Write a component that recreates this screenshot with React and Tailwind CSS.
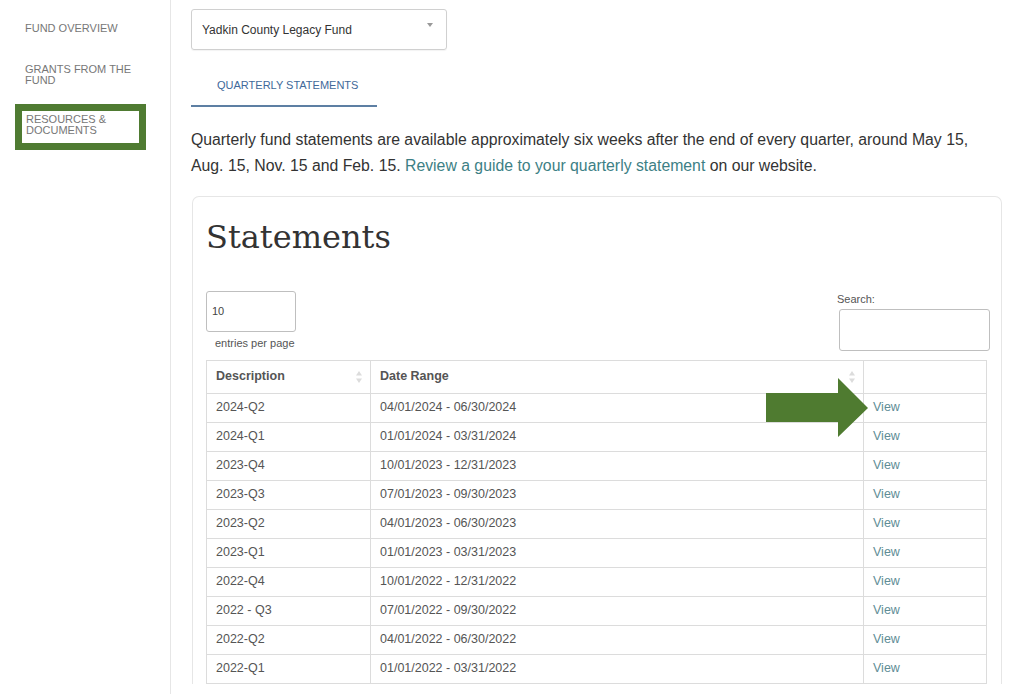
import React from "react";

const statements = [
  { description: "2024-Q2", range: "04/01/2024 - 06/30/2024" },
  { description: "2024-Q1", range: "01/01/2024 - 03/31/2024" },
  { description: "2023-Q4", range: "10/01/2023 - 12/31/2023" },
  { description: "2023-Q3", range: "07/01/2023 - 09/30/2023" },
  { description: "2023-Q2", range: "04/01/2023 - 06/30/2023" },
  { description: "2023-Q1", range: "01/01/2023 - 03/31/2023" },
  { description: "2022-Q4", range: "10/01/2022 - 12/31/2022" },
  { description: "2022 - Q3", range: "07/01/2022 - 09/30/2022" },
  { description: "2022-Q2", range: "04/01/2022 - 06/30/2022" },
  { description: "2022-Q1", range: "01/01/2022 - 03/31/2022" },
];

const SortIcon = () => (
  <svg className="mr-[-2px] h-[14px] w-[8px]" viewBox="0 0 8 14">
    <path d="M4 1 L7 5.5 H1 Z" fill="#dcdcdc" />
    <path d="M4 13 L7 8.5 H1 Z" fill="#dcdcdc" />
  </svg>
);

const Sidebar = () => (
  <aside className="w-[171px] shrink-0 border-r border-[#e6e6e6] pt-[23px]">
    <div className="pl-[25px] text-[11px] leading-[11px] text-[#777]">FUND OVERVIEW</div>
    <div className="mt-[30px] pl-[25px] text-[11px] leading-[11px] text-[#777]">
      GRANTS FROM THE
      <br />
      FUND
    </div>
    <div className="ml-[15px] mt-[18px] h-[46px] w-[131px] border-[7px] border-[#4f7b32] bg-white pl-[4px] pt-[3px] text-[11px] leading-[11px] text-[#777]">
      RESOURCES &amp;
      <br />
      DOCUMENTS
    </div>
  </aside>
);

const Arrow = () => (
  <svg
    className="pointer-events-none absolute left-[594px] top-[378px] h-[60px] w-[104px]"
    viewBox="0 0 104 60"
  >
    <path d="M1 15 H73 V0 L103 30 L73 59 V44 H1 Z" fill="#4f7b30" />
  </svg>
);

const App = () => {
  return (
    <div className="flex h-[694px] w-[1024px] overflow-hidden bg-white font-['Liberation_Sans',Arial,sans-serif]">
      <Sidebar />
      <main className="relative flex-1 pl-[20px] pt-[9px]">
        <div className="flex h-[41px] w-[256px] items-center justify-between rounded-[3px] border border-[#d0d0d0] pl-[10px] pr-[13px] shadow-[0_1px_1px_rgba(0,0,0,0.05)]">
          <span className="text-[12px] text-[#333]">Yadkin County Legacy Fund</span>
          <span className="mb-[10px] h-0 w-0 border-x-[3px] border-t-[4px] border-x-transparent border-t-[#999]" />
        </div>
        <div className="mt-[29px] w-[186px] border-b-2 border-[#5d7fa3] pb-[14px] pl-[26px] text-[11px] leading-[12px] text-[#41699a]">
          QUARTERLY STATEMENTS
        </div>
        <p className="mt-[20px] w-[790px] text-[15.8px] leading-[26px] text-[#333]">
          Quarterly fund statements are available approximately six weeks after the end of every
          quarter, around May 15, Aug. 15, Nov. 15 and Feb. 15.{" "}
          <span className="text-[#3d7f85]">Review a guide to your quarterly statement</span> on our
          website.
        </p>
        <section className="ml-[1px] mt-[17px] w-[810px] rounded-t-[7px] border border-b-0 border-[#e6e6e6] px-[13px] pt-[20px]">
          <h1 className="font-['DejaVu_Serif',serif] text-[32px] leading-[40px] text-[#333]">
            Statements
          </h1>
          <div className="mt-[34px] flex items-start justify-between">
            <div>
              <div className="flex h-[41px] w-[90px] items-center rounded-[3px] border border-[#bfbfbf] pl-[5px] text-[11px] text-[#444]">
                10
              </div>
              <div className="mt-[3px] pl-[9px] text-[11px] text-[#555]">entries per page</div>
            </div>
            <div className="mt-[2px] mr-[-2px]">
              <div className="ml-[-2px] text-[11px] leading-[12px] text-[#555]">Search:</div>
              <div className="mt-[4px] h-[42px] w-[151px] rounded-[3px] border border-[#bfbfbf]" />
            </div>
          </div>
          <table className="mt-[8px] w-[781px] border-collapse text-[12.5px] text-[#555]">
            <thead>
              <tr className="h-[33px]">
                <th className="w-[164px] border border-[#dcdcdc] px-[9px] text-left font-bold">
                  <div className="flex items-center justify-between">
                    Description
                    <SortIcon />
                  </div>
                </th>
                <th className="w-[493px] border border-[#dcdcdc] px-[9px] text-left font-bold">
                  <div className="flex items-center justify-between">
                    Date Range
                    <SortIcon />
                  </div>
                </th>
                <th className="border border-[#dcdcdc]" />
              </tr>
            </thead>
            <tbody>
              {statements.map(row => (
                <tr className="h-[29px]" key={row.description}>
                  <td className="border border-[#dcdcdc] px-[9px]">{row.description}</td>
                  <td className="border border-[#dcdcdc] px-[9px]">{row.range}</td>
                  <td className="border border-[#dcdcdc] px-[9px] text-[#5f8d96]">View</td>
                </tr>
              ))}
            </tbody>
          </table>
        </section>
        <Arrow />
      </main>
    </div>
  );
};

export default App;
